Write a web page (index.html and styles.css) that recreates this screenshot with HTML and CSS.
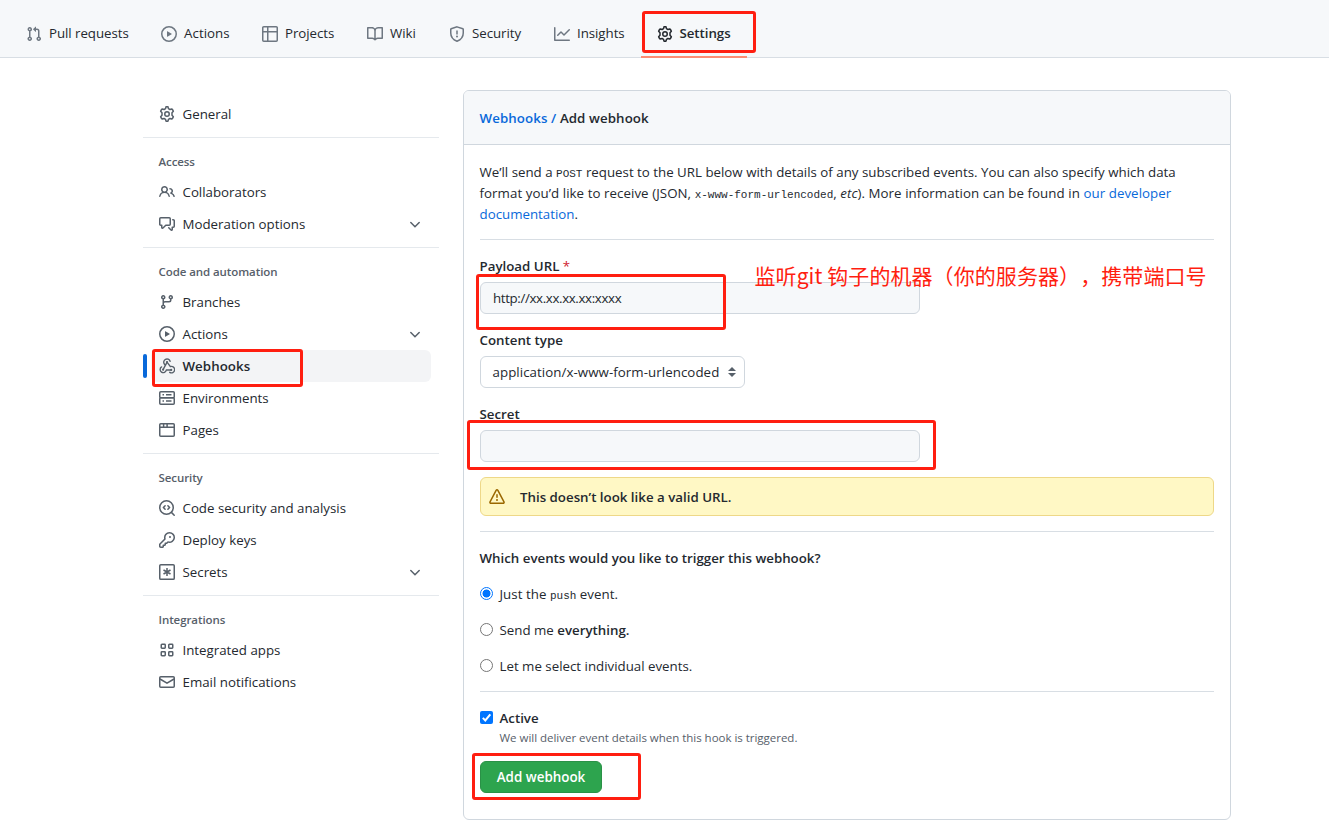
FILE: index.html
```html
<!DOCTYPE html>
<html lang="en">
<head>
<meta charset="utf-8">
<title>Add webhook</title>
<link rel="stylesheet" href="styles.css">
</head>
<body>
<svg class="sprite" aria-hidden="true">
  <symbol id="pr" viewBox="0 0 16 16"><path fill-rule="evenodd" d="M7.177 3.073L9.573.677A.25.25 0 0110 .854v4.792a.25.25 0 01-.427.177L7.177 3.427a.25.25 0 010-.354zM3.75 2.5a.75.75 0 100 1.5.75.75 0 000-1.5zm-2.25.75a2.25 2.25 0 113 2.122v5.256a2.251 2.251 0 11-1.500 0V5.372A2.25 2.25 0 011.5 3.25zM11 2.5h-1V4h1a1 1 0 011 1v5.628a2.251 2.251 0 101.5 0V5A2.5 2.5 0 0011 2.5zm1 10.25a.75.75 0 111.5 0 .75.75 0 01-1.5 0zM3.75 12a.75.75 0 100 1.5.75.75 0 000-1.5z"/></symbol>
  <symbol id="play" viewBox="0 0 16 16"><path fill-rule="evenodd" d="M1.5 8a6.5 6.5 0 1113 0 6.5 6.5 0 01-13 0zM8 0a8 8 0 100 16A8 8 0 008 0zM6.379 5.227A.25.25 0 006 5.442v5.117a.25.25 0 00.379.214l4.264-2.559a.25.25 0 000-.428L6.379 5.227z"/></symbol>
  <symbol id="table" viewBox="0 0 16 16"><path fill-rule="evenodd" d="M0 1.75C0 .784.784 0 1.75 0h12.5C15.216 0 16 .784 16 1.75v12.5A1.75 1.75 0 0114.250 16H1.75A1.75 1.75 0 010 14.25V1.75zM1.500 6.500v7.750c0 .138.112.25.25.25H5v-8H1.500zM5 5H1.500V1.750a.25.25 0 01.250-.250H5V5zm1.500 1.500v8h7.750a.25.25 0 00.250-.250V6.500h-8zm8-1.500h-8V1.500h7.750a.25.25 0 01.250.250V5z"/></symbol>
  <symbol id="book" viewBox="0 0 16 16"><path fill-rule="evenodd" d="M0 1.75A.75.75 0 01.75 1h4.253c1.227 0 2.317.59 3 1.501A3.744 3.744 0 0111.006 1h4.245a.75.75 0 01.75.75v10.5a.75.75 0 01-.75.75h-4.507a2.25 2.25 0 00-1.591.659l-.622.621a.75.75 0 01-1.06 0l-.622-.621A2.25 2.25 0 005.258 13H.75a.75.75 0 01-.75-.75V1.75zm8.755 3a2.25 2.25 0 012.25-2.25H14.5v9h-3.757c-.71 0-1.4.201-1.992.572l.004-7.322zm-1.504 7.324l.004-5.073-.002-2.253A2.25 2.25 0 005.003 2.5H1.5v9h3.757a3.75 3.75 0 011.994.574z"/></symbol>
  <symbol id="shield" viewBox="0 0 16 16"><path d="M8 .85l5.85 1.900q.400.150.400.600V7c0 4.200-2.800 6.900-6.250 8.200C4.550 13.900 1.750 11.200 1.750 7V3.350q0-.450.400-.600z" fill="none" stroke="currentColor" stroke-width="1.5"/><path d="M7.250 4.500h1.500v4h-1.500z"/><circle cx="8" cy="10.600" r="1"/></symbol>
  <symbol id="graph" viewBox="0 0 16 16"><path fill-rule="evenodd" d="M1.5 1.75a.75.75 0 00-1.500 0v12.500c0 .414.336.75.75.75h14.500a.75.75 0 000-1.500H1.500V1.75zm14.280 2.530a.75.75 0 00-1.060-1.060L10 7.940 7.530 5.470a.75.75 0 00-1.060 0L3.220 8.720a.75.75 0 001.060 1.060L7 7.060l2.470 2.470a.75.75 0 001.060 0l5.250-5.250z"/></symbol>
  <symbol id="gear" viewBox="0 0 16 16"><g fill="none" stroke="currentColor" stroke-width="1.5" stroke-linejoin="round"><path d="M7 .850Q8 .650 9 .850l.450 1.800 1.450.850 1.850-.550q1.200 1 1.600 2.250L13 6.700v2.600l1.350 1.500q-.400 1.250-1.600 2.250l-1.850-.550-1.450.850-.450 1.800q-1 .200-2 0L6.550 13.350 5.100 12.500l-1.850.550q-1.200-1-1.600-2.250L3 9.300V6.700L1.650 5.200q.400-1.250 1.600-2.250l1.850.550 1.450-.850z"/><circle cx="8" cy="8" r="2.250"/></g></symbol>
  <symbol id="people" viewBox="0 0 16 16"><path fill-rule="evenodd" d="M5.500 3.500a2 2 0 100 4 2 2 0 000-4zM2 5.500a3.500 3.500 0 115.898 2.549 5.507 5.507 0 013.034 4.084.75.75 0 11-1.482.235 4.001 4.001 0 00-7.900 0 .75.75 0 01-1.482-.236A5.507 5.507 0 013.102 8.050 3.490 3.490 0 012 5.500zM11 4a.75.75 0 100 1.500 1.500 1.500 0 01.666 2.844.75.75 0 00-.416.672v.352a.75.75 0 00.574.730c1.200.289 2.162 1.200 2.522 2.372a.75.75 0 101.434-.440 5.010 5.010 0 00-2.560-3.012A3 3 0 0011 4z"/></symbol>
  <symbol id="comments" viewBox="0 0 16 16"><path fill-rule="evenodd" d="M1.500 2.750a.25.25 0 01.250-.250h8.500a.25.25 0 01.250.250v5.500a.25.25 0 01-.250.250h-3.500a.75.75 0 00-.530.220L3.500 11.440V9.250a.75.75 0 00-.750-.750h-1a.25.25 0 01-.250-.250v-5.500zM1.750 1A1.750 1.750 0 000 2.750v5.500C0 9.216.784 10 1.750 10H2v1.543a1.457 1.457 0 002.487 1.030L7.061 10h3.189A1.750 1.750 0 0012 8.250v-5.500A1.750 1.750 0 0010.250 1h-8.500zM14.500 4.750a.25.25 0 00-.250-.250h-.500a.75.75 0 110-1.500h.500c.966 0 1.750.784 1.750 1.750v5.500A1.750 1.750 0 0114.250 12H14v1.543a1.457 1.457 0 01-2.487 1.030L9.220 12.280a.75.75 0 111.060-1.060l2.220 2.220v-2.190a.75.75 0 01.750-.750h1a.25.25 0 00.250-.250v-5.500z"/></symbol>
  <symbol id="chevron" viewBox="0 0 16 16"><path d="M3.800 6.500L8 10.700l4.200-4.200" fill="none" stroke="currentColor" stroke-width="1.5" stroke-linecap="round"/></symbol>
  <symbol id="branch" viewBox="0 0 16 16"><path fill-rule="evenodd" d="M11.750 2.500a.75.75 0 100 1.500.75.75 0 000-1.500zm-2.250.750a2.250 2.250 0 113 2.122V6A2.500 2.500 0 0110 8.500H6a1 1 0 00-1 1v1.128a2.251 2.251 0 11-1.500 0V5.372a2.250 2.250 0 111.500 0v1.836A2.492 2.492 0 016 7h4a1 1 0 001-1v-.628A2.250 2.250 0 019.500 3.250zM4.250 12a.75.75 0 100 1.500.75.75 0 000-1.500zM3.500 3.250a.75.75 0 111.500 0 .75.75 0 01-1.500 0z"/></symbol>
  <symbol id="webhook" viewBox="0 0 16 16"><g fill="none" stroke="currentColor" stroke-width="1.4" stroke-linecap="round" stroke-linejoin="round"><path d="M5.500 6.300A3.250 3.250 0 1111.100 3.300M8 4.300L4.200 11.400M5.500 6.300L6 7"/><path d="M8.200 4.300l3.200 4.300a3.200 3.200 0 11-.700 5.700"/><path d="M2.600 8.900a3.100 3.100 0 104.700 3.100H12"/></g><circle cx="8" cy="4" r="1.100"/><circle cx="4.100" cy="11.700" r="1.100"/><circle cx="12.200" cy="11.900" r="1.100"/></symbol>
  <symbol id="server" viewBox="0 0 16 16"><g fill="none" stroke="currentColor" stroke-width="1.5"><rect x=".75" y="1.750" width="14.500" height="6" rx="1"/><rect x=".75" y="7.750" width="14.500" height="6.500" rx="1"/><path d="M3.500 4.750H5M7 4.750h5.500M3.500 11H5M7 11h5.500"/></g></symbol>
  <symbol id="browser" viewBox="0 0 16 16"><g fill="none" stroke="currentColor" stroke-width="1.5"><rect x=".75" y="1.750" width="14.500" height="12.500" rx="1"/><path d="M1 5.300h14M4.600 2v3M8.100 2v3"/></g></symbol>
  <symbol id="codescan" viewBox="0 0 16 16"><g fill="none" stroke="currentColor" stroke-width="1.5" stroke-linecap="round" stroke-linejoin="round"><circle cx="7.500" cy="7.500" r="6.750"/><path d="M12.400 12.400l2.800 2.800M6.100 5.700L4.400 7.500l1.700 1.800M8.900 5.700l1.700 1.800-1.700 1.800"/></g></symbol>
  <symbol id="key" viewBox="0 0 16 16"><path fill-rule="evenodd" d="M6.500 5.500a4 4 0 112.731 3.795.75.75 0 00-.768.180L7.440 10.500H6.250a.75.75 0 00-.750.750v1.190l-.060.060H4.250a.75.75 0 00-.750.750v1.190l-.060.060H1.750a.25.25 0 01-.250-.250v-1.690l5.024-5.023a.75.75 0 00.181-.768A3.995 3.995 0 016.500 5.500zm4-5.500a5.500 5.500 0 00-5.348 6.788L.220 11.720a.75.75 0 00-.220.530v2C0 15.216.784 16 1.750 16h2a.75.75 0 00.530-.220l.500-.500a.75.75 0 00.220-.530V14h.750a.75.75 0 00.530-.220l.500-.500a.75.75 0 00.220-.530V12h.750a.75.75 0 00.530-.220l.932-.932A5.500 5.500 0 1010.500 0zm.500 6a1 1 0 100-2 1 1 0 000 2z"/></symbol>
  <symbol id="asterisk" viewBox="0 0 16 16"><g fill="none" stroke="currentColor" stroke-width="1.5"><rect x=".75" y=".75" width="14.500" height="14.500" rx="1.100"/><path d="M8 4v8M4.500 6l7 4M4.500 10l7-4"/></g></symbol>
  <symbol id="apps" viewBox="0 0 16 16"><g fill="none" stroke="currentColor" stroke-width="1.5"><rect x="2.250" y="2.250" width="4" height="4" rx=".7"/><rect x="9.750" y="2.250" width="4" height="4" rx=".7"/><rect x="2.250" y="9.750" width="4" height="4" rx=".7"/><rect x="9.750" y="9.750" width="4" height="4" rx=".7"/></g></symbol>
  <symbol id="mail" viewBox="0 0 16 16"><g fill="none" stroke="currentColor" stroke-width="1.5"><rect x=".75" y="2.750" width="14.500" height="10.500" rx="1"/><path d="M1 5l7 4.200L15 5"/></g></symbol>
  <symbol id="alert" viewBox="0 0 16 16"><path fill-rule="evenodd" d="M8.220 1.754a.25.25 0 00-.440 0L1.698 13.132a.25.25 0 00.220.368h12.164a.25.25 0 00.220-.368L8.220 1.754zm-1.763-.707c.659-1.234 2.427-1.234 3.086 0l6.082 11.378A1.750 1.750 0 0114.082 15H1.918a1.750 1.750 0 01-1.543-2.575L6.457 1.047zM9 11a1 1 0 11-2 0 1 1 0 012 0zm-.250-5.250a.75.75 0 00-1.500 0v2.500a.75.75 0 001.500 0v-2.500z"/></symbol>
</svg>

<nav class="topnav">
  <a class="tab tab-pulls"><svg><use href="#pr"/></svg><span>Pull requests</span></a>
  <a class="tab tab-actions"><svg><use href="#play"/></svg><span>Actions</span></a>
  <a class="tab tab-projects"><svg><use href="#table"/></svg><span>Projects</span></a>
  <a class="tab tab-wiki"><svg><use href="#book"/></svg><span>Wiki</span></a>
  <a class="tab tab-security"><svg><use href="#shield"/></svg><span>Security</span></a>
  <a class="tab tab-insights"><svg><use href="#graph"/></svg><span>Insights</span></a>
  <a class="tab tab-settings"><svg><use href="#gear"/></svg><span>Settings</span></a>
</nav>

<main class="layout">
  <aside class="sidebar">
    <section class="group">
      <a class="item"><svg><use href="#gear"/></svg><span>General</span></a>
    </section>
    <section class="group">
      <h3>Access</h3>
      <a class="item"><svg><use href="#people"/></svg><span>Collaborators</span></a>
      <a class="item"><svg><use href="#comments"/></svg><span>Moderation options</span><svg class="chev"><use href="#chevron"/></svg></a>
    </section>
    <section class="group">
      <h3>Code and automation</h3>
      <a class="item"><svg><use href="#branch"/></svg><span>Branches</span></a>
      <a class="item"><svg><use href="#play"/></svg><span>Actions</span><svg class="chev"><use href="#chevron"/></svg></a>
      <a class="item current"><svg><use href="#webhook"/></svg><span>Webhooks</span></a>
      <a class="item"><svg><use href="#server"/></svg><span>Environments</span></a>
      <a class="item"><svg><use href="#browser"/></svg><span>Pages</span></a>
    </section>
    <section class="group">
      <h3>Security</h3>
      <a class="item"><svg><use href="#codescan"/></svg><span>Code security and analysis</span></a>
      <a class="item"><svg><use href="#key"/></svg><span>Deploy keys</span></a>
      <a class="item"><svg><use href="#asterisk"/></svg><span>Secrets</span><svg class="chev"><use href="#chevron"/></svg></a>
    </section>
    <section class="group">
      <h3>Integrations</h3>
      <a class="item"><svg><use href="#apps"/></svg><span>Integrated apps</span></a>
      <a class="item"><svg><use href="#mail"/></svg><span>Email notifications</span></a>
    </section>
  </aside>

  <div class="box">
    <header class="box-head"><a>Webhooks /</a> <span>Add webhook</span></header>
    <form class="box-body">
      <p class="intro"><span class="line l1">We’ll send a <code>POST</code> request to the URL below with details of any subscribed events. You can also specify which data</span><span class="line l2">format you’d like to receive (JSON, <code>x-www-form-urlencoded</code>, <em>etc</em>). More information can be found in <a>our developer</a></span><span class="line l3"><a>documentation</a>.</span></p>
      <div class="fields">
        <label class="field"><b>Payload URL <i class="req">*</i></b><span class="input url">http://xx.xx.xx.xx:xxxx</span></label>
        <label class="field"><b>Content type</b><span class="select"><span>application/x-www-form-urlencoded</span><svg viewBox="0 0 8 10"><path d="M4 0l4 4H0zM4 10L0 6h8z"/></svg></span></label>
        <label class="field"><b>Secret</b><span class="input"></span></label>
        <div class="flash"><svg><use href="#alert"/></svg><span>This doesn’t look like a valid URL.</span></div>
      </div>
      <div class="events">
        <b class="question">Which events would you like to trigger this webhook?</b>
        <label class="choice"><i class="radio on"></i><span class="push">Just the <code>push</code> event.</span></label>
        <label class="choice"><i class="radio"></i><span class="all">Send me <b>everything.</b></span></label>
        <label class="choice"><i class="radio"></i><span class="some">Let me select individual events.</span></label>
      </div>
      <div class="active">
        <label class="active-row"><svg class="check" viewBox="0 0 13 13"><rect width="13" height="13" rx="2"/><path d="M2.800 6.900l2.500 2.500 5-6"/></svg><b>Active</b></label>
        <p class="note">We will deliver event details when this hook is triggered.</p>
        <button type="button" class="submit">Add webhook</button>
      </div>
    </form>
  </div>
</main>

<div class="mark mark-settings"></div>
<div class="mark mark-webhooks"></div>
<div class="mark mark-url"></div>
<div class="mark mark-secret"></div>
<div class="mark mark-submit"></div>
<div class="remark" lang="zh-CN">监听git 钩子的机器（你的服务器），携带端口号</div>
</body>
</html>
```
FILE: styles.css
```css
* { box-sizing: border-box; }
body { margin: 0; width: 1329px; height: 829px; overflow: hidden; position: relative; background: #fff; color: #24292f; font: 13.3px/21px "Open Sans", "Noto Sans", sans-serif; }
svg { width: 16px; height: 16px; flex: none; fill: currentColor; }
.sprite { position: absolute; width: 0; height: 0; }
a { color: #0969da; text-decoration: none; }
b { font-weight: 600; }
code { font: 11px "Liberation Mono", monospace; letter-spacing: 0; }
.topnav { height: 58px; padding: 9px 0 0 10px; display: flex; background: #f6f8fa; border-bottom: 1px solid #d8dee4; }
.tab { height: 49px; padding: 0 0 0 16px; display: flex; align-items: center; gap: 7px; color: #24292f; white-space: nowrap; flex: none; letter-spacing: -.05px; }
.tab svg { color: #6e7781; }
.tab-pulls { width: 135px; }
.tab-actions { width: 101px; letter-spacing: .05px; }
.tab-projects { width: 105px; }
.tab-wiki { width: 82px; }
.tab-security { width: 105px; }
.tab-insights { width: 103px; }
.tab-settings { width: 106px; border-bottom: 2px solid #fd8c73; padding-top: 2px; font-weight: 600; gap: 6.500px; }
.tab-settings svg { color: #24292f; }
.layout { display: flex; padding: 32px 0 0 143px; gap: 24px; align-items: flex-start; }
.sidebar { width: 296px; padding-top: 8px; }
.group + .group { margin-top: 7px; border-top: 1px solid #e5e9ed; }
.group h3 { margin: 0; height: 38px; padding: 14px 0 0 15.5px; font-size: 11.5px; line-height: 20px; font-weight: 600; color: #57606a; letter-spacing: -.08px; }
.item { height: 32px; width: 280px; margin-left: 8px; padding: 0 8px; display: flex; align-items: center; gap: 7.500px; color: #24292f; border-radius: 6px; white-space: nowrap; position: relative; }
.item svg { color: #57606a; }
.item .chev { margin-left: auto; }
.current { background: #f3f4f6; font-weight: 600; letter-spacing: .05px; }
.current::before { content: ""; position: absolute; left: -8px; top: 4px; width: 4px; height: 24px; border-radius: 6px; background: #0969da; }
.box { width: 768px; height: 730px; border: 1px solid #d0d7de; border-radius: 6px; overflow: hidden; }
.box-head { height: 54px; padding: 0 15.500px; line-height: 54px; background: #f6f8fa; border-bottom: 1px solid #d0d7de; font-weight: 600; letter-spacing: .09px; }
.box-body { padding: 17px 16px; }
.intro { margin: 0; height: 78px; border-bottom: 1px solid #d8dee4; }
.line { display: block; white-space: nowrap; margin-left: -.5px; }
.l2 { letter-spacing: .06px; }
.fields { padding-top: 16px; border-bottom: 1px solid #d8dee4; height: 292px; }
.field { display: flex; flex-direction: column; height: 74px; }
.field b { height: 26px; line-height: 21px; margin-left: -.5px; }
.field:first-child b { white-space: pre; }
.req { color: #cf222e; font-style: normal; font-weight: 400; }
.input { width: 440px; height: 32px; border: 1px solid #d0d7de; border-radius: 6px; background: #f6f8fa; padding: 0 12px; line-height: 30px; }
.url { letter-spacing: -.36px; }
.select { width: 265px; height: 32px; border: 1px solid #d0d7de; border-radius: 6px; padding: 0 8px 0 11.500px; display: flex; align-items: center; justify-content: space-between; white-space: nowrap; letter-spacing: .06px; }
.select svg { width: 8px; height: 10px; color: #57606a; }
.flash { height: 39px; margin-top: -1px; padding: 1px 8px 0; display: flex; align-items: center; gap: 15px; border: 1px solid #eed888; border-radius: 6px; background: #fff8c5; font-weight: 600; }
.flash svg { color: #9a6700; }
.events { height: 160px; padding-top: 16px; border-bottom: 1px solid #d8dee4; }
.question { display: block; height: 36px; margin-left: -.5px; }
.choice { display: flex; align-items: flex-start; gap: 6.500px; height: 36px; }
.radio { width: 13px; height: 13px; margin-top: 3px; border: 1px solid #767676; border-radius: 50%; }
.radio.on { border-color: #0075ff; background: radial-gradient(circle, #0075ff 0 3.700px, #fff 4.300px); }
.push { letter-spacing: .04px; }
.active { padding-top: 16px; }
.active-row { display: flex; height: 21px; gap: 6.500px; }
.check { width: 13px; height: 13px; margin-top: 3px; fill: #0075ff; }
.check path { fill: none; stroke: #fff; stroke-width: 2; }
.note { margin: 0 0 14px 19.500px; font-size: 11.500px; line-height: 18px; color: #57606a; white-space: nowrap; letter-spacing: -.02px; }
.submit { display: block; width: 122px; height: 32px; padding: 0; border: 1px solid #2a9147; border-radius: 6px; background: #2da44e; color: #fff; font: 600 13.400px "Open Sans", sans-serif; }
.mark { position: absolute; border: 3px solid #ff1e10; border-radius: 3px; }
.mark-settings { left: 642px; top: 11px; width: 114px; height: 42px; }
.mark-webhooks { left: 152px; top: 349px; width: 151px; height: 38px; }
.mark-url { left: 476px; top: 274px; width: 250px; height: 56px; }
.mark-secret { left: 467px; top: 420px; width: 469px; height: 50px; }
.mark-submit { left: 472px; top: 753px; width: 169px; height: 47px; }
.remark { position: absolute; left: 754.500px; top: 260px; font: 21px/30px "Noto Sans CJK SC", sans-serif; letter-spacing: .08px; text-spacing-trim: space-all; color: #ff1e10; white-space: nowrap; }
```
